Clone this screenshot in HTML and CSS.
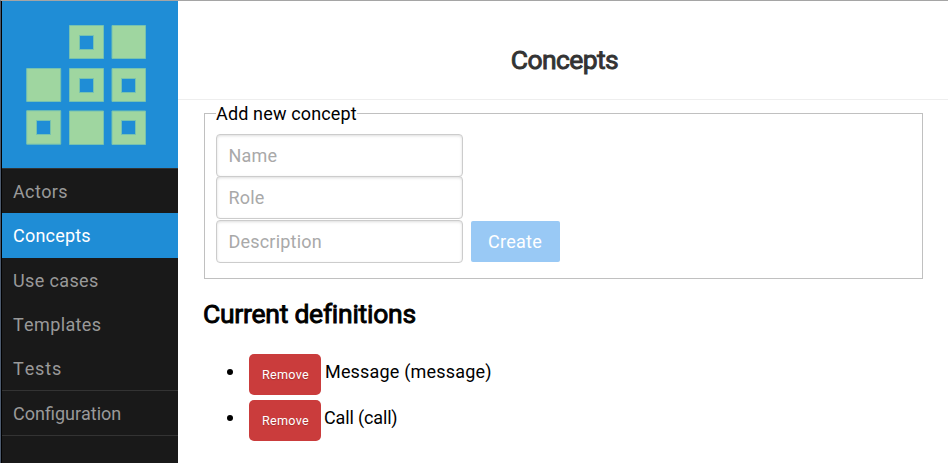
FILE: index.html
```html
<!DOCTYPE html>
<html lang="en">
<head>
<meta charset="utf-8">
<title>Concepts</title>
<link rel="stylesheet" href="styles.css">
</head>
<body>
<div class="layout">
  <nav class="sidebar">
    <a class="brand" href="#">
      <svg class="logo" width="120" height="121" viewBox="0 0 120 121" fill="#9fd6a0" stroke="#76c2b0" fill-rule="evenodd" aria-label="Logo">
        <path d="M43.500 .5h34v33h-34zM53.500 10.500h14v14h-14z"/>
        <path d="M86 .5h33.500v33h-33.500z"/>
        <path d="M.7 43.500h34v33h-34z"/>
        <path d="M43.500 43.500h34v33h-34zM53.500 53.500h14v14h-14z"/>
        <path d="M86 43.500h33.500v33h-33.500zM95.500 53.500h14v14h-14z"/>
        <path d="M.7 85.700h34v33.500h-34zM10.500 95.500h14v14h-14z"/>
        <path d="M43.500 86h34v33.500h-34z"/>
        <path d="M86 86h33.500v33.500h-33.500zM95.500 95.500h14v14h-14z"/>
      </svg>
    </a>
    <ul class="menu">
      <li><a href="#">Actors</a></li>
      <li class="selected"><a href="#">Concepts</a></li>
      <li><a href="#">Use cases</a></li>
      <li><a href="#">Templates</a></li>
      <li class="wide"><a href="#">Tests</a></li>
      <li class="divided"><a href="#">Configuration</a></li>
    </ul>
  </nav>
  <main class="main">
    <header class="header"><h1>Concepts</h1></header>
    <div class="content">
      <form>
        <fieldset>
          <legend>Add new concept</legend>
          <input type="text" placeholder="Name">
          <input class="role" type="text" placeholder="Role">
          <div class="row">
            <input type="text" placeholder="Description">
            <button class="create" type="button">Create</button>
          </div>
        </fieldset>
      </form>
      <h2>Current definitions</h2>
      <ul class="definitions">
        <li><button class="remove" type="button">Remove</button><span>Message (message)</span></li>
        <li><button class="remove" type="button">Remove</button><span class="short">Call (call)</span></li>
      </ul>
    </div>
  </main>
</div>
</body>
</html>
```
FILE: styles.css
```css
* { box-sizing: border-box; }
body {
  margin: 0;
  height: 463px;
  overflow: hidden;
  border-top: 1px solid #a5a5a5;
  border-left: 1px solid #4c5a6e;
  background: #fff;
  font: 18px/23px Roboto, sans-serif;
  color: #000;
}
.layout { display: flex; height: 462px; }
.sidebar {
  width: 177px;
  flex: none;
  background: #191919;
  border-left: 1px solid #000;
}
.brand { display: block; height: 167px; padding: 24px 0 0 24px; background: #1f8dd6; }
.logo { display: block; }
.menu { list-style: none; margin: 0; padding: 0; border-top: 1px solid #333; border-bottom: 1px solid #333; }
.menu a {
  display: block;
  height: 44px;
  padding: 11px 0 0 11px;
  color: #999;
  text-decoration: none;
  letter-spacing: .37px;
  font-kerning: none;
}
.menu .selected a { height: 45px; background: #1f8dd6; color: #fff; letter-spacing: .2px; }
.menu .wide a { letter-spacing: .9px; }
.menu .divided { border-top: 1px solid #333; }
.menu .divided a { letter-spacing: 0; }
.main { flex: 1; }
.header { height: 99px; border-bottom: 1px solid #eee; text-align: center; }
h1, h2 {
  margin: 0;
  font-size: 26.500px;
  line-height: 32px;
  font-weight: 400;
  letter-spacing: -.26px;
  -webkit-text-stroke: .9px currentColor;
}
h1 { padding: 43px 0 0 3px; color: #333; letter-spacing: -.6px; }
.content { padding: 2px 25px 0 26px; }
fieldset { margin: 0; padding: 9px 11px 15px; height: 177px; border: 1px solid silver; }
legend { padding: 0; height: 22px; line-height: 24px; letter-spacing: .15px; }
input {
  display: block;
  width: 247px;
  height: 43px;
  padding: 0 12px 0 11.500px;
  border: 1px solid #ccc;
  border-radius: 4px;
  box-shadow: inset 0 1px 3px #ddd;
  font: 18px Roboto, sans-serif;
  letter-spacing: .2px;
}
input:first-of-type { margin-top: 1px; }
input.role { margin-top: -1px; margin-bottom: 1px; }
.row input:first-of-type { margin-top: 0; }
input::placeholder { color: #a9a9a9; }
.row { display: flex; align-items: center; gap: 8px; }
button { border: 0; padding: 0; font-family: Roboto, sans-serif; color: #fff; }
.create {
  width: 89px;
  height: 41px;
  padding-right: 1px;
  border-radius: 2px;
  background: #99c9f5;
  font-size: 18px;
  letter-spacing: .3px;
}
h2 { margin: 19px 0 24px -1px; }
.definitions { list-style: none; margin: 0; padding-left: 23px; }
.definitions li { display: flex; align-items: center; height: 41px; margin-bottom: 5px; }
.definitions li::before {
  content: "";
  width: 6px;
  height: 6px;
  margin: 0 16px 5px 0;
  border-radius: 50%;
  background: #000;
}
.definitions span { margin: 0 0 7px 4px; letter-spacing: .18px; }
.definitions .short { margin-left: 3px; letter-spacing: -.15px; }
.remove {
  width: 72px;
  height: 41px;
  padding-left: 1px;
  border-radius: 5px;
  background: #ca3c3c;
  font-size: 12.600px;
  letter-spacing: .3px;
  text-shadow: 0 1px 1px rgba(0, 0, 0, .2);
}
```
